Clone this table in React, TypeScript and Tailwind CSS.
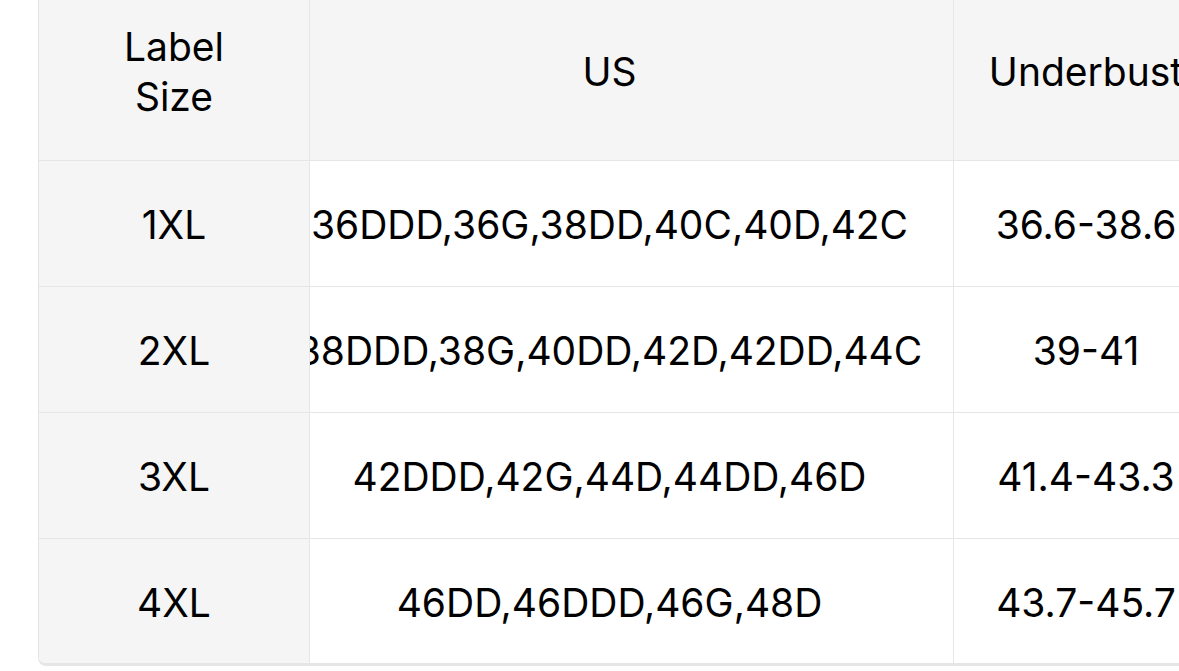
import React from 'react';

const ROWS = [
  { label: '1XL', us: '36DDD,36G,38DD,40C,40D,42C', underbust: '36.6-38.6' },
  { label: '2XL', us: '38DDD,38G,40DD,42D,42DD,44C', underbust: '39-41' },
  { label: '3XL', us: '42DDD,42G,44D,44DD,46D', underbust: '41.4-43.3' },
  { label: '4XL', us: '46DD,46DDD,46G,48D', underbust: '43.7-45.7' },
];

export default function App() {
  return (
    <div
      className="w-[1179px] h-[671px] overflow-hidden bg-white text-black"
      style={{ fontFamily: 'Inter, "Noto Sans", sans-serif' }}
    >
      <div className="ml-[38px] w-[1260px] overflow-hidden rounded-bl-[8px] border-l border-b-[3px] border-[#e6e6e6] border-l-[#e3e3e3]">
        {/* header */}
        <div className="flex h-[161px] border-b border-[#e6e6e6] bg-[#f5f5f5] text-[39px] leading-[50px]">
          <div className="flex w-[271px] shrink-0 items-center justify-center pb-[16px] text-center border-r border-[#e6e6e6]">
            Label
            <br />
            Size
          </div>
          <div className="flex w-[644px] shrink-0 items-center justify-center pb-[16px] pr-[44px] border-r border-[#e6e6e6]">
            US
          </div>
          <div className="flex w-[264px] shrink-0 items-center justify-center whitespace-nowrap pb-[16px]">
            Underbust
          </div>
        </div>

        {ROWS.map((row, i) => (
          <div
            key={row.label}
            className={`flex text-[39px] ${i < ROWS.length - 1 ? 'h-[126px] border-b border-[#e6e6e6]' : 'h-[124px]'}`}
          >
            <div className="flex w-[271px] shrink-0 items-center justify-center pt-[4px] bg-[#f5f5f5] border-r border-[#e6e6e6]">
              {row.label}
            </div>
            <div className="flex w-[644px] shrink-0 items-center justify-center overflow-hidden whitespace-nowrap pt-[4px] pr-[44px] border-r border-[#e6e6e6]">
              {row.us}
            </div>
            <div className="flex w-[264px] shrink-0 items-center justify-center whitespace-nowrap pt-[4px]">
              {row.underbust}
            </div>
          </div>
        ))}
      </div>
    </div>
  );
}
